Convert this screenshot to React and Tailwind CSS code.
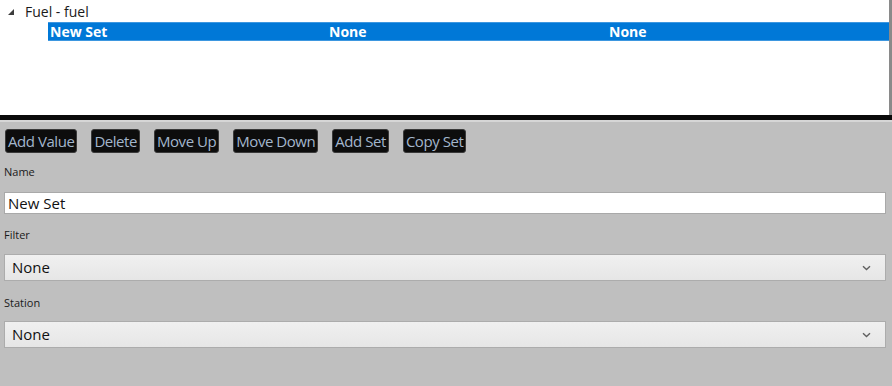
import React from 'react';

const font = { fontFamily: '"Segoe UI", "Open Sans", "Noto Sans", sans-serif' };

const buttons = ['Add Value', 'Delete', 'Move Up', 'Move Down', 'Add Set', 'Copy Set'];

const Chevron = () => (
  <svg width="9" height="6" viewBox="0 0 9 6" className="text-[#606060]">
    <path d="M1 1.2 L4.5 4.5 L8 1.2" fill="none" stroke="currentColor" strokeWidth="1.4" />
  </svg>
);

const Select = ({ value }) => (
  <div className="h-[27px] mr-[6px] flex items-center justify-between pl-[7px] pr-[14px] border border-[#acacac] bg-gradient-to-b from-[#f0f0f0] to-[#e6e6e6] text-[15px] text-[#111]">
    <span>{value}</span>
    <Chevron />
  </div>
);

const App = () => {
  return (
    <div className="w-[892px] h-[386px] bg-[#bfbfbf] flex flex-col overflow-hidden" style={font}>
      {/* tree view */}
      <div className="h-[115px] bg-white border-r-[3px] border-[#8a8a8a] flex flex-col pt-[1px]">
        <div className="flex items-center h-[21px] text-[14px] text-[#1a1a1a]">
          <svg width="8" height="8" viewBox="0 0 8 8" className="ml-[7px] mr-[10px]">
            <path d="M7 1 L7 7 L1 7 Z" fill="#3c3c3c" />
          </svg>
          <span>Fuel - fuel</span>
        </div>
        <div className="ml-[48px] h-[19px] bg-[#0078d7] flex items-center text-white font-bold text-[14px] border-y border-[#3d97e0]">
          <span className="w-[281px] pl-[2px]">New Set</span>
          <span className="w-[280px]">None</span>
          <span>None</span>
        </div>
      </div>
      {/* splitter */}
      <div className="h-[5px] bg-[#0a0a0a]" />
      <div className="h-[2px] bg-[#d6d6d6]" />

      <div className="flex flex-col pl-[4px]">
        <div className="flex gap-[14px] mt-[7px] pl-[1px]">
          {buttons.map(b => (
            <button
              key={b}
              className="h-[24px] px-[2px] bg-[#0d0d0d] border border-[#3a3a3a] rounded-[3px] text-[15px] leading-none text-[#a3b6cc] tracking-[-0.45px]"
            >
              {b}
            </button>
          ))}
        </div>
        <div className="text-[11px] text-[#1a1a1a] mt-[12px] h-[14px] leading-[14px]">Name</div>
        <input
          readOnly
          value="New Set"
          className="mt-[13px] h-[22px] mr-[6px] bg-white border border-[#a9a9a9] px-[3px] text-[15px] text-[#111] outline-none"
          style={font}
        />
        <div className="text-[11px] text-[#1a1a1a] mt-[14px] h-[14px] leading-[14px]">Filter</div>
        <div className="mt-[12px]"><Select value="None" /></div>
        <div className="text-[11px] text-[#1a1a1a] mt-[15px] h-[14px] leading-[14px]">Station</div>
        <div className="mt-[11px]"><Select value="None" /></div>
      </div>
    </div>
  );
};

export default App;
